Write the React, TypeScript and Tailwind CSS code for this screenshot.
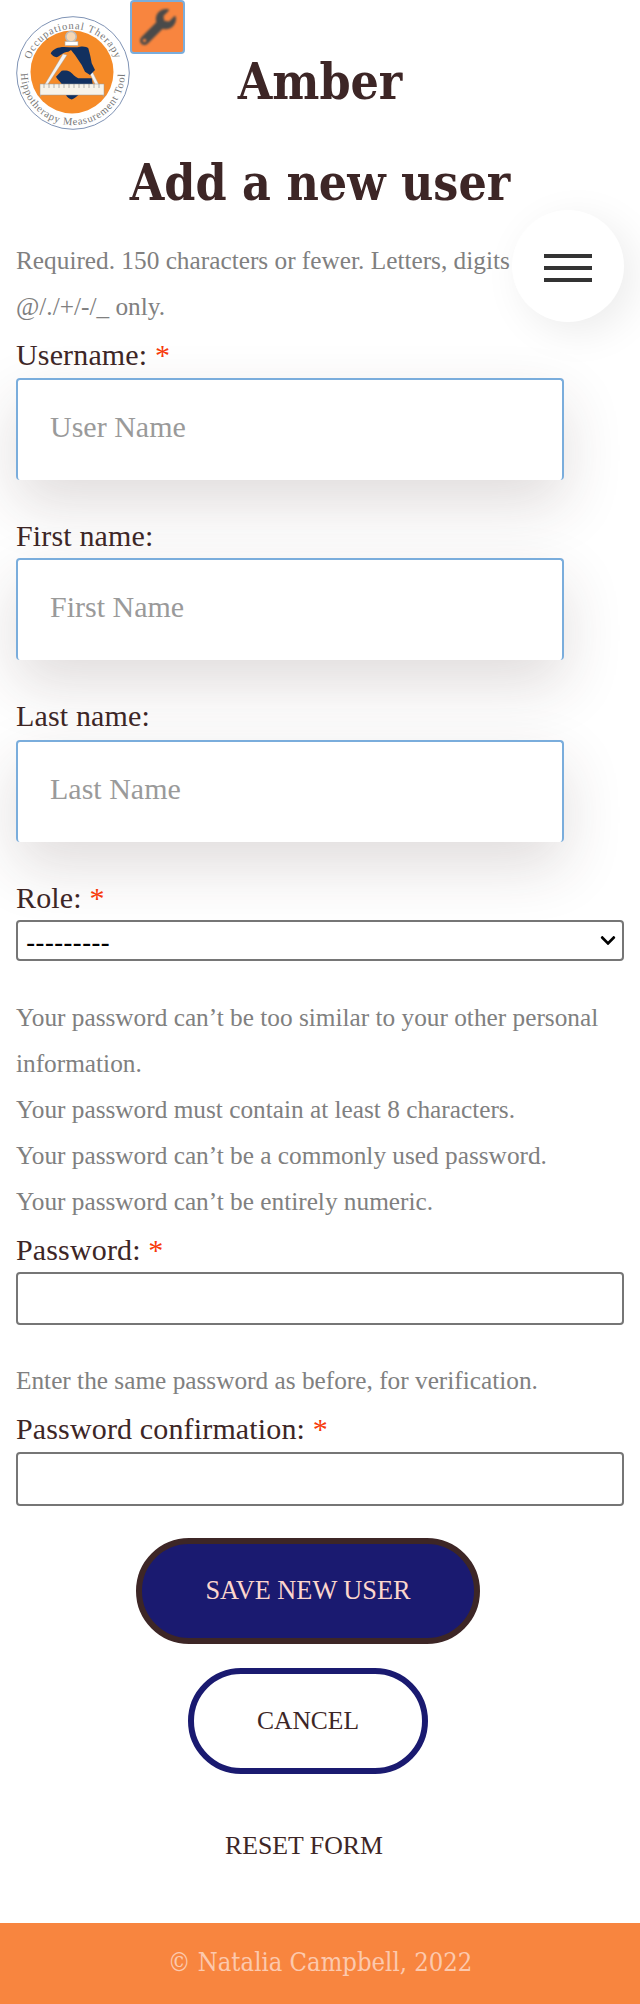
import { FaWrench, FaChevronDown } from "react-icons/fa";

const body = "font-['Liberation_Serif',serif]";
const head = "font-['DejaVu_Serif_Condensed','DejaVu_Serif',serif]";

function Logo() {
  return (
    <svg width="116" height="116" viewBox="0 0 116 116" className="shrink-0">
      <circle cx="57" cy="57" r="56.3" fill="#fff" stroke="#7f93b5" strokeWidth="1" />
      <circle cx="56" cy="56" r="41.5" fill="#f68b28" />
      <defs>
        <path id="arcTop" d="M 12 58 A 45 45 0 0 1 102 58" />
        <path id="arcBottom" d="M 5 57 A 52 52 0 0 0 109 57" />
      </defs>
      <text fontSize="10.5" fill="#777" fontFamily="'Liberation Serif', serif" letterSpacing="0.9">
        <textPath href="#arcTop" startOffset="50%" textAnchor="middle">Occupational Therapy</textPath>
      </text>
      <text fontSize="10.5" fill="#777" fontFamily="'Liberation Serif', serif" letterSpacing="0.8">
        <textPath href="#arcBottom" startOffset="50%" textAnchor="middle">Hippotherapy Measurement Tool</textPath>
      </text>
      <circle cx="55" cy="20.7" r="5.2" fill="#f6d7b4" stroke="#bbb" strokeWidth="1.6" />
      <rect x="49" y="25.5" width="13" height="4" fill="#fff" stroke="#aaa" strokeWidth="0.6" />
      <path d="M47 38 L29 68 L24 81 L32 68 L51 39 Z" fill="#f3f3f3" stroke="#999" strokeWidth="0.4" />
      <path d="M76 55 L82.5 68 L88 81 L79 68 L74 58 Z" fill="#f3f3f3" stroke="#999" strokeWidth="0.4" />
      <path d="M34.7 37.3 C37 33 42 31 48 31 C54 31 60 32 64 30.7 C68 30 71 31 72.3 32.3 C74 38 75 43 75.7 47.3 L79 54 L74 59 L69 55.7 L65.7 49 L59 39 L55 34 L52.3 35.7 C47 36 44 40 40.7 41.3 C38 41 36 39.5 34.7 37.3 Z" fill="#12305f" />
      <path d="M40 60.7 L45.7 54.7 C49 54 52 54.5 54 55.7 C57 58 59 61 62.3 62.3 L75.7 62.3 L76.7 68 L45.7 68 C44 65 41 63 40 60.7 Z" fill="#12305f" />
      <path d="M50 79 L62.3 79 C60 81 58 83 55.7 83.5 C53 83 51 81 50 79 Z" fill="#12305f" />
      <rect x="24" y="68" width="64" height="11" fill="#f7f3ea" stroke="#999" strokeWidth="0.5" />
      <path d="M28 72V68M33 72V68M38 72V68M43 72V68M48 72V68M53 72V68M58 72V68M63 72V68M68 72V68M73 72V68M78 72V68M83 72V68" stroke="#888" strokeWidth="0.6" />
    </svg>
  );
}

function Req() {
  return <span className="text-[#f73a0a]"> *</span>;
}

function Label({ children, className = "" }: { children: React.ReactNode; className?: string }) {
  return <label className={`block text-[30px] leading-[24px] tracking-[0.15px] text-[#3d2626] ${className}`}>{children}</label>;
}

function TextField({ label, ph, req, labelGap }: { label: string; ph: string; req?: boolean; labelGap: string }) {
  return (
    <div className="mb-[44px]">
      <Label className={labelGap}>
        {label}
        {req && <Req />}
      </Label>
      <input
        placeholder={ph}
        className="block w-[548px] h-[102px] rounded-[4px] border-2 border-b-0 border-[#7aaddc] bg-white pl-[32px] pb-[6px] text-[30px] outline-none shadow-[0_24px_60px_rgba(61,38,38,0.16)] placeholder:text-[#9a9a9a]"
      />
    </div>
  );
}

function Help({ children }: { children: React.ReactNode }) {
  return <p className="text-[25.3px] leading-[46px] text-[#808080]">{children}</p>;
}

export default function App() {
  return (
    <div className={`${body} relative w-[640px] h-[2004px] bg-white flex flex-col`}>
      <header>
        <div className="grid grid-cols-[185px_1fr_185px]">
          <div className="flex items-start">
            <div className="pl-[16px] pt-[16px]">
              <Logo />
            </div>
            <button className="-ml-[2px] flex h-[54px] w-[56px] items-center justify-center rounded-[4px] border-2 border-[#7aaddc] bg-[#f8853f]">
              <FaWrench className="h-[36px] w-[36px] text-[#4a4a4a] blur-[1.2px]" />
            </button>
          </div>
          <h1 className={`${head} text-center text-[49.5px] font-bold leading-[60px] text-[#3d2626] pt-[52px]`}>Amber</h1>
          <div />
        </div>
        <h2 className={`${head} text-center text-[49.5px] font-bold leading-[60px] text-[#3d2626] mt-[21px]`}>Add a new user</h2>
      </header>

      <form className="px-[16px] mt-[24px]">
        <div className="mb-[14px]">
          <Help>Required. 150 characters or fewer. Letters, digits and @/./+/-/_ only.</Help>
        </div>
        <TextField label="Username:" ph="User Name" req labelGap="mb-[11px]" />
        <TextField label="First name:" ph="First Name" labelGap="mb-[10px]" />
        <TextField label="Last name:" ph="Last Name" labelGap="mb-[12px]" />

        <Label className="mb-[10px]">
          Role:
          <Req />
        </Label>
        <div className="relative w-[608px]">
          <select className="block h-[41px] w-full appearance-none rounded-[4px] border-2 border-[#767676] bg-white pl-[8px] font-['Liberation_Sans',sans-serif] text-[28px] text-black">
            <option>---------</option>
          </select>
          <FaChevronDown className="pointer-events-none absolute right-[6px] top-[12px] h-[17px] w-[20px] text-black" />
        </div>

        <div className="mt-[33px] mb-[14px]">
          <Help>Your password can’t be too similar to your other personal information.</Help>
          <Help>Your password must contain at least 8 characters.</Help>
          <Help>Your password can’t be a commonly used password.</Help>
          <Help>Your password can’t be entirely numeric.</Help>
        </div>
        <Label className="mb-[10px]">
          Password:
          <Req />
        </Label>
        <input className="block w-[608px] h-[53px] rounded-[4px] border-2 border-[#767676] bg-white" />

        <div className="mt-[32px] mb-[14px]">
          <Help>Enter the same password as before, for verification.</Help>
        </div>
        <Label className="mb-[11px]">
          Password confirmation:
          <Req />
        </Label>
        <input className="block w-[608px] h-[54px] rounded-[4px] border-2 border-[#767676] bg-white" />

        <div className="mt-[32px] flex flex-col items-center pr-[24px]">
          <button className="h-[106px] w-[344px] rounded-full border-[6px] border-[#3d2626] bg-[#1a1a70] text-[26.3px] text-[#fcd6cd]">
            SAVE NEW USER
          </button>
          <button className="mt-[24px] h-[106px] w-[240px] rounded-full border-[6px] border-[#1a1a70] bg-white text-[25.5px] text-[#3d2626]">
            CANCEL
          </button>
          <button className="mt-[53px] -ml-[8px] h-[36px] text-[25.8px] text-[#3d2626]">RESET FORM</button>
        </div>
      </form>

      <footer className={`${head} mt-auto flex h-[81px] items-center justify-center bg-[#f8853f] pb-[2px] text-[25.4px] text-[#fcc9ae]`}>
        © Natalia Campbell, 2022
      </footer>

      <button className="absolute left-[512px] top-[210px] flex h-[112px] w-[112px] flex-col items-center justify-center gap-[8px] rounded-full bg-white pt-[4px] shadow-[10px_10px_40px_rgba(0,0,0,0.08)]">
        <span className="block h-[4px] w-[48px] bg-[#333]" />
        <span className="block h-[4px] w-[48px] bg-[#333]" />
        <span className="block h-[4px] w-[48px] bg-[#333]" />
      </button>
    </div>
  );
}
